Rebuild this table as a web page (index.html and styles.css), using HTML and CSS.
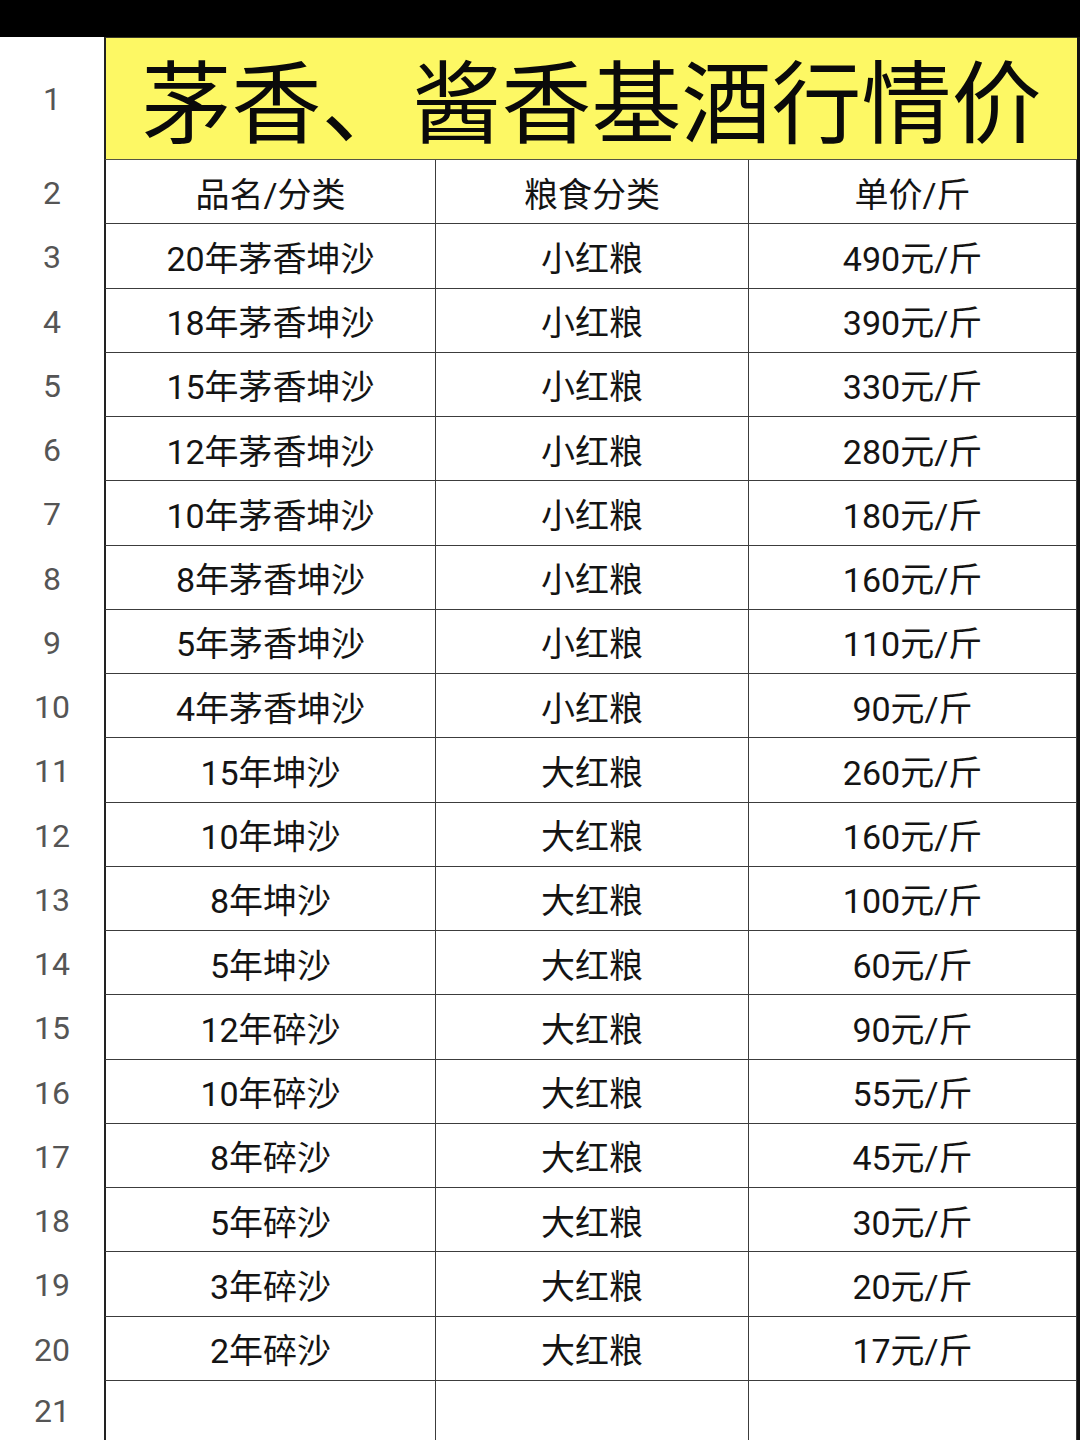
FILE: index.html
```html
<!DOCTYPE html>
<html lang="zh-CN">
<head>
<meta charset="utf-8">
<title>茅香、酱香基酒行情价</title>
<link rel="stylesheet" href="styles.css">
</head>
<body>
<div class="topbar"></div>
<div class="page">
  <div class="sheet">
    <div class="rn title-rn">1</div>
    <div class="title">茅香、酱香基酒行情价</div>

    <div class="rn">2</div><div class="c c1">品名/分类</div><div class="c">粮食分类</div><div class="c">单价/斤</div>
    <div class="rn">3</div><div class="c c1">20年茅香坤沙</div><div class="c">小红粮</div><div class="c">490元/斤</div>
    <div class="rn">4</div><div class="c c1">18年茅香坤沙</div><div class="c">小红粮</div><div class="c">390元/斤</div>
    <div class="rn">5</div><div class="c c1">15年茅香坤沙</div><div class="c">小红粮</div><div class="c">330元/斤</div>
    <div class="rn">6</div><div class="c c1">12年茅香坤沙</div><div class="c">小红粮</div><div class="c">280元/斤</div>
    <div class="rn">7</div><div class="c c1">10年茅香坤沙</div><div class="c">小红粮</div><div class="c">180元/斤</div>
    <div class="rn">8</div><div class="c c1">8年茅香坤沙</div><div class="c">小红粮</div><div class="c">160元/斤</div>
    <div class="rn">9</div><div class="c c1">5年茅香坤沙</div><div class="c">小红粮</div><div class="c">110元/斤</div>
    <div class="rn">10</div><div class="c c1">4年茅香坤沙</div><div class="c">小红粮</div><div class="c">90元/斤</div>
    <div class="rn">11</div><div class="c c1">15年坤沙</div><div class="c">大红粮</div><div class="c">260元/斤</div>
    <div class="rn">12</div><div class="c c1">10年坤沙</div><div class="c">大红粮</div><div class="c">160元/斤</div>
    <div class="rn">13</div><div class="c c1">8年坤沙</div><div class="c">大红粮</div><div class="c">100元/斤</div>
    <div class="rn">14</div><div class="c c1">5年坤沙</div><div class="c">大红粮</div><div class="c">60元/斤</div>
    <div class="rn">15</div><div class="c c1">12年碎沙</div><div class="c">大红粮</div><div class="c">90元/斤</div>
    <div class="rn">16</div><div class="c c1">10年碎沙</div><div class="c">大红粮</div><div class="c">55元/斤</div>
    <div class="rn">17</div><div class="c c1">8年碎沙</div><div class="c">大红粮</div><div class="c">45元/斤</div>
    <div class="rn">18</div><div class="c c1">5年碎沙</div><div class="c">大红粮</div><div class="c">30元/斤</div>
    <div class="rn">19</div><div class="c c1">3年碎沙</div><div class="c">大红粮</div><div class="c">20元/斤</div>
    <div class="rn">20</div><div class="c c1">2年碎沙</div><div class="c">大红粮</div><div class="c">17元/斤</div>
    <div class="rn last">21</div><div class="c c1 last"></div><div class="c last"></div><div class="c last"></div>
  </div>
  <div class="edge"></div>
</div>
</body>
</html>
```

FILE: styles.css
```css
html, body {
  margin: 0;
  padding: 0;
  background: #ffffff;
  overflow: hidden;
}
body {
  width: 1080px;
  height: 1440px;
  font-family: Roboto, "Noto Sans CJK SC", sans-serif;
  color: #141414;
}
.topbar {
  height: 37px;
  background: #000000;
}
.page {
  display: flex;
  height: 1403px;
}
.sheet {
  width: 1077px;
  display: grid;
  grid-template-columns: 104px 332px 313px 328px;
  grid-template-rows: 123px repeat(19, 64.25px) 1fr;
  align-content: start;
}
.edge {
  width: 3px;
  background: #111111;
}
.rn {
  display: flex;
  align-items: center;
  justify-content: center;
  font-size: 32px;
  color: #555555;
  padding-top: 2px;
  box-sizing: border-box;
}
.title-rn {
  padding-top: 0;
}
.title {
  grid-column: 2 / span 3;
  background: #fdf864;
  border-top: 1px solid #3a3a2a;
  border-left: 2px solid #222222;
  border-bottom: 1px solid #555544;
  box-sizing: border-box;
  display: flex;
  align-items: center;
  justify-content: center;
  font-family: "Noto Sans CJK SC", sans-serif;
  font-weight: 400;
  font-size: 90px;
  color: #0a0a0a;
  padding-bottom: 4px;
}
.c {
  display: flex;
  align-items: center;
  justify-content: center;
  border-right: 1px solid #3c3c3c;
  border-bottom: 1px solid #3c3c3c;
  box-sizing: border-box;
  font-size: 34px;
  padding-top: 1px;
  color: #141414;
}
.c1 {
  border-left: 2px solid #222222;
}
.c.last {
  border-bottom: none;
}
```
